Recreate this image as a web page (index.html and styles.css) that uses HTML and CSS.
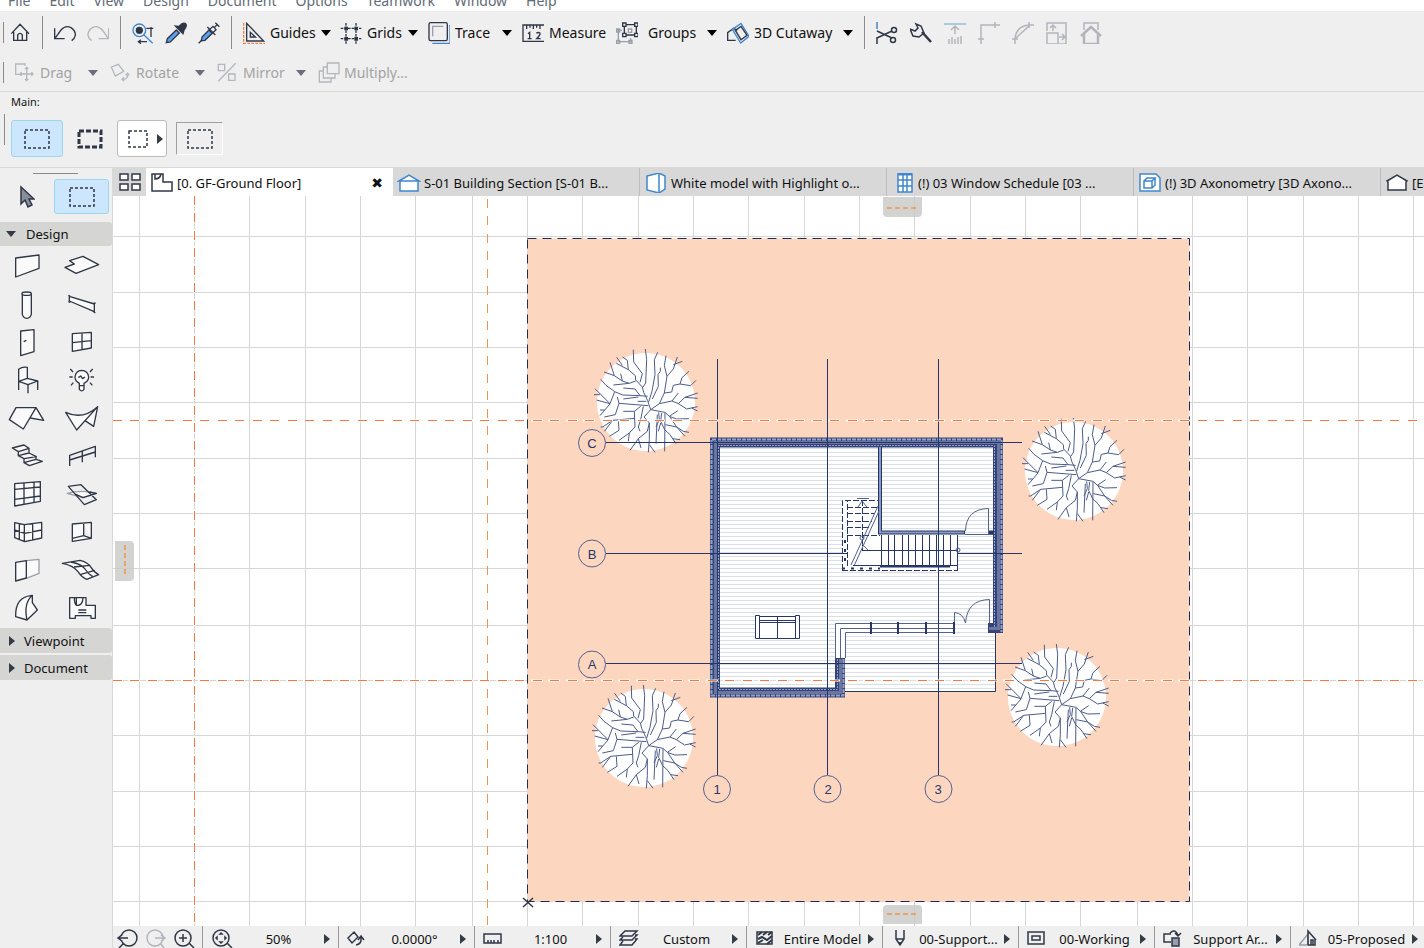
FILE: index.html
```
<!DOCTYPE html>
<html lang="en">
<head>
    <meta charset="UTF-8">
    <meta name="viewport" content="width=device-width, initial-scale=1.0">
    <title>GF-Ground Floor</title>
    <link rel="stylesheet" href="styles.css">
</head>
<body>

<nav class="menu">
    <button>File</button>
    <button>Edit</button>
    <button>View</button>
    <button>Design</button>
    <button>Document</button>
    <button>Options</button>
    <button>Teamwork</button>
    <button>Window</button>
    <button>Help</button>
</nav>

<div class="toolbar">
    <span class="grip"></span>
    <button class="tool" aria-label="Home"><svg class="icon" viewBox="27 63 66 66"><path d="M34 98L60 70L87 98M41 93V118H80V93M53 118V102Q60 92 67 102V118"/></svg></button>
    <span class="sep"></span>
    <button class="tool" aria-label="Undo"><svg class="icon" viewBox="159 63 66 66"><path d="M161 82V113H191M162 112L180 87Q194 71 210 80Q224 89 223 103Q221 113 212 119"/></svg></button>
    <button class="tool off" aria-label="Redo"><svg class="icon" viewBox="261 63 66 66"><path d="M326 82V113H296M325 112L307 87Q293 71 277 80Q263 89 264 103Q266 113 275 119"/></svg></button>
    <span class="sep"></span>
    <button class="tool" aria-label="Find and Select"><svg class="icon" viewBox="395 63 66 66"><circle class="blue" cx="417" cy="88" r="19"/><circle class="dark" cx="417" cy="88" r="9"/><path class="blue" d="M431 102L457 127"/><path d="M438 82H459M452 78V108M414 122H440M422 116L414 122L422 128"/></svg></button>
    <button class="tool" aria-label="Pick Up Parameters"><svg class="icon" viewBox="495 63 66 66"><path class="bluefill" d="M499 125L502 113L529 87L538 96L511 123Z"/><path class="dark" d="M526 75L549 98L552 87Q564 72 555 67Q548 64 537 76Z"/></svg></button>
    <button class="tool" aria-label="Inject Parameters"><svg class="icon" viewBox="597 63 66 66"><path class="bluefill" d="M607 119L609 108L630 87L640 97L618 118Z"/><path d="M599 127L609 117M625 78L649 102M630 87L642 76L651 86L640 97M646 80L656 69M649 65L661 77"/></svg></button>
    <span class="sep"></span>
    <div class="labelled">
        <button class="text-tool"><svg class="icon" viewBox="729 63 66 66"><path d="M740 67V120H791ZM751 94V108H766Z"/><path class="orange" d="M731 66V127H795" stroke-dasharray="8 4"/></svg><span>Guides</span><i class="down"></i></button>
        <button class="text-tool"><svg class="icon" viewBox="1018 63 66 66"><path d="M1036 66V128M1066 66V128M1020 82H1082M1020 113H1082" stroke-dasharray="8 3"/><path class="dark" d="M1033 79h7v7h-7zM1063 79h7v7h-7zM1033 110h7v7h-7zM1063 110h7v7h-7z"/></svg><span>Grids</span><i class="down"></i></button>
        <button class="text-tool"><svg class="icon" viewBox="22 63 66 66"><path class="blue" d="M85 74H88V127H35"/><rect x="25" y="65" width="55" height="54" rx="5"/><path class="soft" d="M36 106V76H68"/></svg><span>Trace</span><i class="down"></i></button>
        <button class="text-tool"><svg class="icon" viewBox="305 63 66 66"><path d="M371 72H308V121H371M319 73V84M329 73V80M339 73V84M349 73V80M359 73V84M323 98L328 94V113M322 113H334M348 97Q354 92 359 97Q361 101 349 113H361"/></svg><span>Measure</span></button>
        <button class="text-tool roomy"><svg class="icon" viewBox="588 63 66 66"><path class="soft" d="M606 88H595V122H632V112M590 84h9v9h-9zM590 118h9v9h-9zM627 118h9v9h-9zM625 84h10v10h-10z"/><path d="M616 71H646M616 102H646M613 75V98M649 75V98M608 66h10v10h-10zM644 66h10v10h-10zM608 97h10v10h-10zM644 97h10v10h-10z"/></svg><span>Groups</span><i class="down"></i></button>
        <button class="text-tool"><svg class="icon" viewBox="920 63 66 66"><path d="M946 118H922V95L940 82L951 88"/><path class="blue" d="M936 85L962 67L986 106L961 126Z"/><path d="M945 88L962 76L980 103L962 116Z"/></svg><span>3D Cutaway</span><i class="down"></i></button>
    </div>
    <span class="sep"></span>
    <div class="edit-tools">
        <button class="tool" aria-label="Split"><svg class="icon" viewBox="0 0 22 22"><path class="blue" d="M1 0V7"/><path d="M1 15V22M1 9L16 16M1 16L16 9"/><circle cx="18" cy="8" r="2.5"/><circle cx="17" cy="18" r="2.5"/></svg></button>
        <button class="tool" aria-label="Adjust"><svg class="icon" viewBox="0 0 22 22"><path d="M6 2L11 4L14 11L9 15L3 14L0 7L5 9L8 6Z"/><path class="heavy" d="M12 10L21 20"/></svg></button>
        <button class="tool off" aria-label="Trim to Elevation"><svg class="icon" viewBox="0 0 22 22"><path class="cyan" d="M0 2H22"/><path d="M11 12V4M7 8L11 4L15 8M5 17V22M8 15V22M11 17V22M14 15V22M17 14V22"/></svg></button>
        <button class="tool off" aria-label="Intersect"><svg class="icon" viewBox="0 0 22 22"><path d="M3 22V3H22M0 17H6M17 0V6"/></svg></button>
        <button class="tool off" aria-label="Fillet"><svg class="icon" viewBox="0 0 22 22"><path d="M3 22V17Q4 4 17 3H22M0 17H6M17 0V6M4 16L17 4"/></svg></button>
        <button class="tool off" aria-label="Resize"><svg class="icon" viewBox="0 0 22 22"><path d="M1 9V1H20V22H13M1 11H12V22H1ZM7 9V4M4 6L7 3L10 6M13 15H19M16 12L19 15L16 18"/></svg></button>
        <button class="tool off" aria-label="Edit Elevation"><svg class="icon" viewBox="0 0 22 22"><path d="M4 8V1H18V8"/><path class="heavy" d="M1 14L11 5L21 14M4 12V22H18V12"/></svg></button>
    </div>
</div>

<div class="toolbar second">
    <span class="grip"></span>
    <button class="text-tool" disabled><svg class="icon" viewBox="44 183 66 66"><path d="M77 194V189H49V220H62M82 199V239M62 219H101M77 204L82 199L87 204M77 234L82 239L87 234M67 214L62 219L67 224M96 214L101 219L96 224"/></svg><span>Drag</span><i class="down"></i></button>
    <button class="text-tool" disabled><svg class="icon" viewBox="330 183 66 66"><path d="M334 198L355 190L371 211L346 225ZM367 235Q384 236 383 218M372 229L366 235L372 241M377 223L383 217L388 223"/></svg><span>Rotate</span><i class="down"></i></button>
    <button class="text-tool" disabled><svg class="icon" viewBox="652 183 66 66"><path d="M656 190H675V209H656ZM687 219H706V238H687ZM656 241L708 187"/></svg><span>Mirror</span><i class="down"></i></button>
    <button class="text-tool" disabled><svg class="icon" viewBox="946 183 66 66"><path d="M974 186H1009V218H974ZM974 198H962V231H997V219M962 210H950V243H985V232"/></svg><span>Multiply...</span></button>
</div>

<section class="infobox">
    <h2>Main:</h2>
    <div class="methods">
        <span class="grip"></span>
        <button class="method selected" aria-label="Marquee"><svg class="marquee" viewBox="0 0 26 20"><rect x="1" y="1" width="24" height="18"/></svg></button>
        <button class="method" aria-label="Marquee on all stories"><svg class="marquee bold" viewBox="0 0 26 20"><rect x="2" y="2" width="22" height="16"/></svg></button>
        <button class="method raised" aria-label="Geometry method"><svg class="marquee small" viewBox="0 0 20 18"><rect x="1" y="1" width="18" height="16"/></svg><i class="right"></i></button>
        <button class="method sunken" aria-label="Default settings"><svg class="marquee" viewBox="0 0 26 20"><rect x="1" y="1" width="24" height="18"/></svg></button>
    </div>
</section>

<div class="workspace">
    <aside class="toolbox">
        <div class="selectors">
            <button aria-label="Arrow"><svg class="pointer" viewBox="0 0 16 24"><path d="M2 2V19L6 15L9 22L13 20L10 14H15Z"/></svg></button>
            <button class="selected" aria-label="Marquee"><svg class="marquee" viewBox="0 0 26 20"><rect x="1" y="1" width="24" height="18"/></svg></button>
        </div>
        <button class="group open"><i class="down"></i>Design</button>
        <div class="elements">
            <button aria-label="Wall"><svg viewBox="27 252 108 96"><path d="M47 279L117 270V310L47 336Z"/></svg></button>
            <button aria-label="Slab"><svg viewBox="192 252 108 96"><path d="M209 287L249 274L296 299L228 325L195 307L223 297Z"/></svg></button>
            <button aria-label="Column"><svg viewBox="27 366 108 96"><path d="M67 386V448Q70 459 80 460Q91 459 94 448V386"/><ellipse cx="80" cy="386" rx="14" ry="5"/></svg></button>
            <button aria-label="Beam"><svg viewBox="192 366 108 96"><path d="M208 394L283 417V440L208 408ZM205 391L211 394M205 410L211 412M278 416L287 414M278 438L286 444"/></svg></button>
            <button aria-label="Door"><svg viewBox="27 480 108 96"><path d="M62 498L102 494V560L62 572ZM71 530L79 526"/></svg></button>
            <button aria-label="Window"><svg viewBox="192 480 108 96"><path d="M217 506L274 502V549L217 559ZM246 504V554M217 533L274 527"/></svg></button>
            <button aria-label="Object"><svg viewBox="27 594 108 96"><path d="M56 675V613Q66 605 82 607V640L113 648L84 659L56 649L82 640"/><path class="open" d="M84 659V685M113 648V675"/></svg></button>
            <button aria-label="Lamp"><svg viewBox="192 594 108 96"><path d="M238 662V655Q225 648 225 636Q227 617 245 616Q264 617 266 636Q266 648 252 655V662ZM238 663V673Q245 682 252 673V663"/><path class="open" d="M235 638L242 633L248 641L255 636M208 636H218M272 636H282M211 612L219 621M278 612L270 621M213 661L220 653M277 661L270 653"/></svg></button>
            <button aria-label="Roof"><svg viewBox="27 708 108 96"><path d="M48 728H108L70 792L28 764ZM108 728L131 766L91 759"/></svg></button>
            <button aria-label="Shell"><svg viewBox="192 708 108 96"><path d="M197 742Q248 766 293 725L230 795ZM293 725L281 784L255 767"/></svg></button>
            <button aria-label="Stair"><svg viewBox="27 27 108 96"><path d="M37 54L72 45L87 55L55 65ZM55 65V77L87 69L109 80L72 86V98L108 88L127 94L88 107L72 98M87 55V68M108 78V89M55 77L72 86"/></svg></button>
            <button aria-label="Railing"><svg viewBox="192 27 108 96"><path class="open" d="M209 108V76L286 49V82M247 97V64M209 90L286 66"/></svg></button>
            <button aria-label="Curtain Wall"><svg viewBox="27 141 108 96"><path d="M44 161L121 155V214L44 228ZM72 158V222M102 157V217M44 178L121 171M44 208L121 198"/></svg></button>
            <button aria-label="Mesh"><svg viewBox="192 141 108 96"><path class="soft" d="M202 190Q245 178 289 190L249 203Z"/><path class="open" d="M205 169L243 164L289 209L253 224ZM226 192L249 203L289 190L268 186"/></svg></button>
            <button aria-label="Grid Structure"><svg viewBox="27 255 108 96"><path d="M44 278L73 284L125 277V324L74 335L44 323ZM73 284V335M58 281V329M98 281V329M44 300L74 310L125 300"/></svg></button>
            <button aria-label="Skylight"><svg viewBox="192 255 108 96"><path d="M217 282L274 277V325L217 334ZM251 280V317L274 325M251 317L217 325"/></svg></button>
            <button aria-label="Curtain Panel"><svg viewBox="27 369 108 96"><path class="soft" d="M79 392L117 388V430L79 445"/><path d="M47 397L79 392V444L47 453Z"/></svg></button>
            <button aria-label="Grid Surface"><svg viewBox="192 369 108 96"><path d="M187 400L240 391Q263 396 273 412T296 434L260 448Q246 443 234 425T187 400Z"/><path class="open" d="M222 411L270 406M240 434L284 421M213 396Q246 403 255 417T278 440"/></svg></button>
            <button aria-label="Morph"><svg viewBox="27 483 108 96"><path d="M97 496Q45 500 47 560L81 570L112 540L97 518ZM97 496Q70 520 81 570"/></svg></button>
            <button aria-label="Zone"><svg viewBox="192 483 108 96"><path d="M209 503H258V526H286V565H273V557H226V565H209Z"/><path class="open" d="M223 503Q223 520 229 526Q248 528 249 503M229 503V526M235 540H259M235 548H259"/></svg></button>
        </div>
        <button class="group"><i class="right"></i>Viewpoint</button>
        <button class="group"><i class="right"></i>Document</button>
    </aside>

    <main class="views">
        <div class="tabs">
            <button class="overview" aria-label="Tab overview"><svg viewBox="0 0 24 20"><path d="M2 2H10V8H2ZM14 2H22V8H14ZM2 12H10V18H2ZM14 12H22V18H14Z"/></svg></button>
            <button class="tab active"><svg viewBox="0 0 24 20"><path d="M2 1H13V9H22V18H2ZM5 1V6Q10 6 11 1"/></svg><span>[0. GF-Ground Floor]</span><b>✖</b></button>
            <button class="tab"><svg viewBox="0 0 24 20"><path class="blue" d="M2 8L12 2L22 8ZM3 8H21V18H3Z"/></svg><span>S-01 Building Section [S-01 B...</span></button>
            <button class="tab"><svg viewBox="0 0 24 20"><path class="blue" d="M3 3L15 0L15 20L3 17ZM15 0L21 3V16L15 20"/></svg><span>White model with Highlight o...</span></button>
            <button class="tab"><svg viewBox="0 0 24 20"><path class="blue" d="M7 1H21V19H7ZM7 7H21M7 13H21M12 1V19M16 1V19"/><path class="blue heavy" d="M7 1H21"/></svg><span>(!) 03 Window Schedule [03 ...</span></button>
            <button class="tab"><svg viewBox="0 0 24 20"><path class="blue" d="M2 1H18L22 5V18H2ZM6 8H14V15H6ZM6 8L9 5H17L14 8M17 5V12L14 15"/></svg><span>(!) 3D Axonometry [3D Axono...</span></button>
            <button class="tab"><svg viewBox="0 0 24 20"><path d="M2 8L12 2L22 8L21 9V17H3V9Z"/></svg><span>[East Elevation]</span></button>
        </div>

        <!-- floor plan, drawn in window coordinates and shifted to the canvas origin -->
        <svg class="canvas">
            <defs>
                <pattern id="boards" width="8" height="4" patternUnits="userSpaceOnUse">
                    <rect width="8" height="4" fill="#fff"/>
                    <rect width="8" height="1" fill="#d9dee9"/>
                </pattern>
                <g id="tree">
                    <circle r="49" fill="#fff"/>
                    <path class="branches" transform="scale(.3333) translate(-228 -187)" d="M242 210L233 183L221 158L217 142L197 121L196 108L175 90L172 62L158 52M175 90L139 71M157 77L140 53M190 30L191 67L217 102L210 128M197 124L178 131L157 124M178 131L130 136M157 124L152 102M157 124L133 108L120 68M133 108L102 97M226 28L230 60L227 130L219 142M263 38L253 60L255 105L246 155L236 187M288 48L283 78L291 110L283 160L268 192L242 210M291 110L310 88L322 52M310 75L337 65M271 84V95L264 105L265 140L247 178M283 160L305 157L310 137L330 133L336 114L357 95M330 133L362 138L378 122M268 192L306 184L325 160M306 184L325 192L345 173L383 160M345 173L383 176M325 192L350 208L383 201M365 205L383 214M235 198L147 191M142 172L147 191L136 225L103 232M229 185H203M233 170L210 168L158 166L134 156L108 137L92 119M134 156L120 192L75 147M72 165L90 165M120 192L80 181M120 193L90 228M90 211L104 211M210 168L195 148L160 145M205 172L160 178M242 210L285 218L298 230L323 213M298 230L320 238L357 237M242 210L222 232L238 250L232 275L205 297L180 332M205 297L213 325M238 250V300L235 338M238 315L255 338M262 225L258 312M266 218L268 240L258 262M275 220L272 245L284 270L300 285L318 312M308 297L330 300M285 220L284 335M286 255L320 262L340 275L357 278M300 232L320 262L345 290M272 250L265 275M220 200L212 240L205 262L210 275M212 200L193 215L195 262L178 280L147 302M178 280L175 305M193 215H160M193 236L128 242L98 262L92 262M145 242L147 272L118 290M128 242L103 275"/>
                </g>
            </defs>
            <g transform="translate(-113 -196)">
                <path class="grid" d="M139.500 190V930M194.500 190V930M249.500 190V930M305.500 190V930M360.500 190V930M415.500 190V930M472.500 190V930M527.500 190V930M582.500 190V930M638.500 190V930M693.500 190V930M748.500 190V930M804.500 190V930M859.500 190V930M914.500 190V930M970.500 190V930M1025.500 190V930M1080.500 190V930M1137.500 190V930M1192.500 190V930M1247.500 190V930M1303.500 190V930M1358.500 190V930M1413.500 190V930"/>
                <path class="grid" d="M113 236.500H4000M113 292.500H4000M113 347.500H4000M113 402.500H4000M113 458.500H4000M113 513.500H4000M113 568.500H4000M113 625.500H4000M113 680.500H4000M113 735.500H4000M113 791.500H4000M113 846.500H4000M113 901.500H4000"/>
                <rect class="area" x="527.500" y="238.500" width="662" height="663"/>

                <use href="#tree" x="646" y="402"/>
                <use href="#tree" x="1074" y="471"/>
                <use href="#tree" x="644" y="738"/>
                <use href="#tree" x="1057" y="697"/>

                <!-- floor -->
                <path fill="url(#boards)" d="M715 443H998V630H996V691H715Z"/>
                <path class="line" d="M845 691.500H995.500V633"/>

                <!-- outer walls -->
                <path class="wall" d="M840 657V692.500H715V442.500H998V633"/>
                <path class="wall" d="M988 628H998"/>
                <path class="wall-core" d="M840.500 659V692.500H715.500V442.500H998.500V628.500H989"/>
                <path class="wall-outer" d="M843.500 659V695.500H711.500V439.500H1001.500V632"/>
                <path class="wall-inner" d="M837.500 659V689.500H718.500V445.500H994.500V628"/>

                <!-- inner walls and doors -->
                <path class="partition" d="M880 447V532.500H965M989 532.500H994"/>
                <path class="partition-core" d="M880 447V532.500H964"/>
                <path class="thin" d="M965.500 531Q966 509 988.500 508.500V534M965 534.500H993"/>
                <path class="thin" d="M954.500 622V612.500Q963 613 965.500 623Q967 600 989.500 599.500V623"/>

                <!-- glazing -->
                <path fill="#fff" d="M835 623H954V633H845V658H835Z"/>
                <path class="thin" d="M835.500 658V623.500H954M840.500 658V628.500H954M845.500 658V632.500H954"/>
                <path class="mullion" d="M871 622V634M898 622V634M926 622V634M954 622V634"/>

                <!-- stair -->
                <path fill="#fff" d="M842 500H878V535H958V570H842Z"/>
                <path class="dashes" d="M842.500 570V500.500H878M847.500 566V500M847 507.500H878M847 513.500H875M847 521.500H872M847 527.500H870M847 535.500H880M862.500 500V550M842 570.500H958"/>
                <path class="thin" d="M851 565L878 506M854 566L879 511M858 507L862 501L867 507M862 544L869 551"/>
                <path class="thin" d="M857 498.500H869"/>
                <path class="line" d="M862 550.500H957M881.500 535V566M888.500 535V566M894.500 535V566M902.500 535V566M908.500 535V566M915.500 535V566M922.500 535V566M929.500 535V566M936.500 535V566M943.500 535V566M950.500 535V566M957.500 535V570M853 565.500H957"/>
                <path class="rail" d="M880 566.500H950"/>
                <path class="rail" d="M842 568.500H880M845 540V566" stroke-dasharray="3 6"/>
                <circle class="thin" cx="958" cy="550" r="2"/>
                <circle class="thin" cx="862" cy="538" r="2"/>

                <!-- sofa -->
                <path class="line" fill="#fff" d="M755.500 615.500H759.500V638.500H755.500ZM795.500 615.500H799.500V638.500H795.500ZM759.500 616.500H795.500V638.500H759.500ZM759.500 620.500H795.500M759.500 622.500H795.500M777.500 616V639"/>

                <!-- axes -->
                <path class="line" d="M717.500 359V775M827.500 359V775M938.500 359V775M606 442.500H1022M606 553.500H847M958 553.500H1022M606 663.500H1022"/>
                <g class="bubbles">
                    <circle cx="592" cy="443" r="13.500"/>
                    <circle cx="592" cy="553.500" r="13.500"/>
                    <circle cx="592" cy="664.500" r="13.500"/>
                    <circle cx="717" cy="789" r="13.500"/>
                    <circle cx="827.500" cy="789" r="13.500"/>
                    <circle cx="938.500" cy="789" r="13.500"/>
                    <text x="592" y="448">C</text>
                    <text x="592" y="559">B</text>
                    <text x="592" y="669">A</text>
                    <text x="717" y="794">1</text>
                    <text x="828" y="794">2</text>
                    <text x="938" y="794">3</text>
                </g>

                <!-- guide lines -->
                <path class="guide-gap" d="M113 420.500H4000M113 680.500H4000M194.500 196V930"/>
                <path class="guide" d="M113 420.500H4000M113 680.500H4000M194.500 196V930"/>
                <path class="guide pale" d="M487.500 199V930"/>

                <path class="cross" d="M523 898L533 907M533 898L523 907"/>

                <path class="handle" d="M883 197H922V213Q922 217 918 217H887Q883 217 883 213Z"/>
                <path class="handle" d="M883 924V909Q883 905 887 905H918Q922 905 922 909V924Z"/>
                <path class="handle" d="M115 541H130Q134 541 134 545V577Q134 581 130 581H115Z"/>
                <path class="handle-mark" d="M887 208H918M887 914H918M125 545V577"/>
            </g>
        </svg>

        <footer class="status">
            <div class="zooms">
                <button aria-label="Previous zoom"><svg viewBox="0 0 22 20"><circle cx="12" cy="9" r="8"/><path class="gap" d="M1 9H9"/><path d="M1 9H11M5 6L1 9L5 12M7 14L2 19"/></svg></button>
                <button class="off" aria-label="Next zoom"><svg viewBox="0 0 22 20"><circle cx="10" cy="9" r="8"/><path class="gap" d="M13 9H21"/><path d="M10 9H20M16 6L20 9L16 12M15 14L19 19"/></svg></button>
                <button aria-label="Zoom in"><svg viewBox="0 0 22 20"><circle cx="10" cy="9" r="8"/><path d="M6 9H14M10 5V13M16 14L21 19"/></svg></button>
            </div>
            <button class="cell"><svg viewBox="0 0 22 20"><circle cx="10" cy="9" r="8"/><path d="M9 5L10 4L11 5ZM9 13L10 14L11 13ZM6 8L5 9L6 10ZM14 8L15 9L14 10ZM16 14L21 19"/></svg><span>50%</span><i class="right"></i></button>
            <button class="cell"><svg viewBox="0 0 22 20"><path d="M1 9L7 3L11 8L5 14ZM9 16Q15 15 14 8M11 11L14 7L17 11"/></svg><span>0.0000°</span><i class="right"></i></button>
            <button class="cell"><svg viewBox="0 0 22 20"><path d="M1 5H18V14H1ZM5 11V14M8 11V14M11 11V14M15 11V14"/></svg><span>1:100</span><i class="right"></i></button>
            <button class="cell"><svg viewBox="0 0 22 20"><path d="M1 7L6 2H18L13 7ZM16 6H18L13 11H1L4 8M16 10H18L13 16H1L4 12"/></svg><span>Custom</span><i class="right"></i></button>
            <button class="cell"><svg viewBox="0 0 22 20"><path class="heavy" d="M3 6L7 3M8 6L12 3M13 6L17 3M3 10L7 8L12 11L17 7M3 14L8 11M12 15L17 11"/><path d="M2 3H17V15H2Z"/></svg><span>Entire Model</span><i class="right"></i></button>
            <button class="cell"><svg viewBox="0 0 22 20"><path d="M5 1V10L9 16L13 10V1M5 10H13M9 13V16"/></svg><span>00-Support...</span><i class="right"></i></button>
            <button class="cell"><svg viewBox="0 0 22 20"><path d="M1 3H17V15H1ZM5 7H13V11H5Z"/></svg><span>00-Working</span><i class="right"></i></button>
            <button class="cell"><svg viewBox="0 0 22 20"><path d="M8 13H1V5H8M7 4Q12 -1 15 6M12 4L15 7L18 4"/><path class="grey" d="M9 9H16V17H9Z"/></svg><span>Support Ar...</span><i class="right"></i></button>
            <button class="cell"><svg viewBox="0 0 22 20"><path class="soft" d="M0 16L9 5V16Z"/><path d="M9 16V2L17 11M16 10V16H9M12 16V11H14V16"/></svg><span>05-Proposed</span><i class="right"></i></button>
        </footer>
    </main>
</div>

</body>
</html>
```
FILE: styles.css
```
body {
    margin: 0;
    height: 100vh;
    display: flex;
    flex-direction: column;
    overflow: hidden;
    background-color: #efefef;
    color: #111;
    font-family: "Noto Sans", "Open Sans", sans-serif;
    font-size: 14px;
    line-height: 20px;
}

button {
    display: flex;
    align-items: center;
    padding: 0;
    border: none;
    background: none;
    color: inherit;
    font: inherit;
    white-space: nowrap;
}

svg {
    flex: none;
    fill: none;
    stroke: #2f3747;
}

/* arrows of drop-downs and flyouts */
.down, .right {
    flex: none;
    border: 5px solid transparent;
}

.down {
    border-top: 6px solid #000;
    border-bottom: none;
}

.right {
    border-left: 6px solid #333b45;
    border-right: none;
}

/* menu */
.menu {
    display: flex;
    flex: none;
    align-items: flex-end;
    gap: 1px;
    height: 11px;
    overflow: hidden;
    background-color: #fff;
}

.menu button {
    padding: 0 9px;
    color: #5f6b75;
}

.menu button:first-child {
    padding-left: 8px;
}

/* toolbars */
.toolbar {
    display: flex;
    flex: none;
    align-items: center;
    gap: 11px;
    height: 43px;
    padding-left: 9px;
    position: relative;
}

.grip {
    position: absolute;
    left: 3px;
    width: 1px;
    height: 21px;
    background-color: #8b8b8b;
}

.sep {
    flex: none;
    width: 1px;
    height: 33px;
    background-color: #8b8b8b;
}

.icon {
    width: 22px;
    height: 22px;
    stroke-width: 4;
}

.edit-tools .icon {
    stroke-width: 1.5;
}

.icon .blue, .tab .blue {
    stroke: #4087cf;
}

.icon .orange {
    stroke: #f08040;
}

.icon .soft, .elements .soft, .cell .soft {
    stroke: #9a9ea9;
}

.icon .dark {
    fill: #2f3747;
}

.icon .bluefill {
    fill: #5aa0ee;
}

.edit-tools .heavy {
    stroke-width: 2.5;
}

.edit-tools .cyan {
    stroke: #a5cdda;
    stroke-width: 2;
}

.off svg {
    stroke: #b3b5bc;
}

.labelled {
    display: grid;
    grid-template-columns: 97px 88px 94px 94px 111px 126px;
}

.edit-tools {
    display: flex;
    gap: 12px;
}

.text-tool {
    gap: 5px;
    padding-right: 10px;
}

.text-tool .down {
    margin-left: auto;
}

.text-tool.roomy {
    gap: 10px;
}

.labelled .text-tool:last-child {
    padding-right: 0;
}

.second {
    display: grid;
    grid-template-columns: 96px 107px 101px auto;
    justify-content: start;
    gap: 0;
    height: 37px;
    padding-left: 14px;
    border-bottom: 1px solid #d9d9d9;
}

.second .text-tool {
    gap: 4px;
    padding-right: 12px;
    color: #a3a3a3;
}

.second .icon {
    stroke: #b5b7be;
}

.second .down {
    border-top-color: #6d6f78;
}

/* info box */
.infobox {
    flex: none;
    height: 75px;
    border-bottom: 1px solid #d9d9d9;
}

.infobox h2 {
    margin: 0;
    padding: 2px 11px 10px;
    font-size: 11px;
    font-weight: normal;
    line-height: 16px;
}

.methods {
    display: flex;
    align-items: center;
    gap: 1px;
    padding-left: 11px;
    position: relative;
}

.methods .grip {
    left: 4px;
    top: -6px;
    height: 31px;
}

.method {
    box-sizing: border-box;
    justify-content: center;
    width: 52px;
    height: 37px;
    border: 1px solid transparent;
    border-radius: 3px;
}

.selected {
    background-color: #cce6fd;
    border: 1px solid #9bd6ea;
    border-radius: 3px;
}

.raised {
    gap: 9px;
    width: 50px;
    padding-left: 6px;
    background-color: #fff;
    border-color: #bbb;
}

.sunken {
    width: 47px;
    height: 33px;
    margin-left: 8px;
    border-color: #a0a0a0 #fff #fff #a0a0a0;
    border-radius: 0;
}

.marquee {
    width: 26px;
    height: 20px;
    stroke-width: 1.5;
    stroke-dasharray: 3 2;
}

.marquee.bold {
    stroke-width: 3;
    stroke-dasharray: 5 2;
}

.marquee.small {
    width: 20px;
    height: 18px;
}

.workspace {
    display: flex;
    flex: 1;
    min-height: 0;
}

/* toolbox */
.toolbox {
    box-sizing: border-box;
    flex: none;
    width: 113px;
    border-right: 1px solid #d9d9d9;
    font-size: 13px;
}

.selectors {
    display: grid;
    grid-template-columns: 54px 55px;
    height: 35px;
    padding: 11px 0 8px;
    background: linear-gradient(#8b8b8b, #8b8b8b) 33px 5px / 45px 1px no-repeat;
}

.selectors button {
    justify-content: center;
}

.pointer {
    width: 16px;
    height: 24px;
    fill: #888e9b;
    stroke-width: 1.5;
}

.group {
    width: 112px;
    height: 25px;
    gap: 9px;
    margin-bottom: 2px;
    padding-left: 9px;
    background-color: #d5d5d3;
    border-radius: 0 3px 3px 0;
}

.group.open {
    height: 24px;
    gap: 10px;
    margin-bottom: 0;
    padding-left: 6px;
}

.group.open .down {
    border-top-color: #333b45;
}

.elements {
    display: grid;
    grid-template-columns: 54px 55px;
    grid-auto-rows: 38px;
    margin-bottom: 2px;
}

.elements button {
    justify-content: center;
}

.elements svg {
    width: 36px;
    height: 32px;
    fill: #fafafa;
    stroke-width: 4;
    stroke-linejoin: round;
    overflow: visible;
}

.elements .open {
    fill: none;
}

/* views */
.views {
    display: flex;
    flex: 1;
    flex-direction: column;
    min-width: 0;
}

.tabs {
    display: flex;
    flex: none;
    height: 28px;
    overflow: hidden;
    background-color: #d8d8d8;
    font-size: 13px;
}

.tabs svg {
    width: 24px;
    height: 20px;
    fill: #fff;
    stroke-width: 1.5;
}

.overview {
    flex: none;
    justify-content: center;
    width: 33px;
}

.tab {
    box-sizing: border-box;
    flex: none;
    gap: 3px;
    width: 247px;
    padding: 2px 10px 0 4px;
    border-right: 1px solid #bdbdc0;
}

.tab.active {
    background-color: #fff;
    border: none;
}

.tab b {
    margin-left: auto;
    font-family: "DejaVu Sans", sans-serif;
    font-size: 14px;
}

.tab .heavy {
    stroke-width: 3;
}

.canvas {
    flex: 1;
    width: 100%;
    min-height: 0;
    background-color: #fff;
    stroke: none;
}

.grid {
    stroke: #d6d6d6;
}

.area {
    fill: #fdd6c0;
    stroke: #1e2c55;
    stroke-dasharray: 9 6;
}

.branches {
    stroke: #4b5b88;
    stroke-width: 3;
}

.line, .thin, .bubbles circle {
    stroke: #26366b;
}

.thin {
    stroke: #53628f;
}

.wall {
    stroke: #34447a;
    stroke-width: 10;
}

.wall-core {
    stroke: #6a769f;
    stroke-width: 3;
}

.wall-outer {
    stroke: #93a1c3;
    stroke-width: 2;
    stroke-dasharray: 4 1;
}

.wall-inner {
    stroke: #93a1c3;
    stroke-dasharray: 2 1;
}

.partition {
    stroke: #26366b;
    stroke-width: 4;
}

.partition-core {
    stroke: #8a99bd;
    stroke-width: 2;
}

.mullion, .rail {
    stroke: #26366b;
    stroke-width: 2;
}

.dashes {
    stroke: #26366b;
    stroke-dasharray: 6 2;
}

.bubbles circle {
    stroke: #53628f;
}

.bubbles text {
    fill: #26366b;
    font-family: "Liberation Sans", Arial, sans-serif;
    font-size: 13px;
    text-anchor: middle;
}

.guide-gap {
    stroke: #fff;
    stroke-width: 2;
    stroke-dasharray: 12 5 12 6;
    stroke-dashoffset: 2;
}

.guide {
    stroke: #f5793b;
    stroke-dasharray: 9 8 9 9;
}

.guide.pale {
    stroke: #f0934f;
}

.cross {
    stroke: #2f3747;
    stroke-width: 1.5;
}

.handle {
    fill: #c8c8c6;
    fill-opacity: .8;
}

.handle-mark {
    stroke: #e5a66c;
    stroke-width: 2;
    stroke-dasharray: 5 3;
}

/* status bar */
.status {
    display: grid;
    grid-template-columns: 89px repeat(9, minmax(136px, 1fr));
    flex: none;
    height: 22px;
    overflow: hidden;
    font-size: 13px;
}

.status svg {
    width: 22px;
    height: 20px;
    stroke-width: 1.5;
}

.status .gap {
    stroke: #efefef;
    stroke-width: 4;
}

.status .heavy {
    stroke-width: 2;
}

.status .grey {
    fill: #9a9ea9;
}

.zooms {
    display: flex;
    justify-content: space-between;
    padding: 2px 7px 0 4px;
}

.cell {
    padding: 3px 8px 0;
    border-left: 1px solid #999;
}

.cell span {
    flex: 1;
    text-align: center;
}
```
